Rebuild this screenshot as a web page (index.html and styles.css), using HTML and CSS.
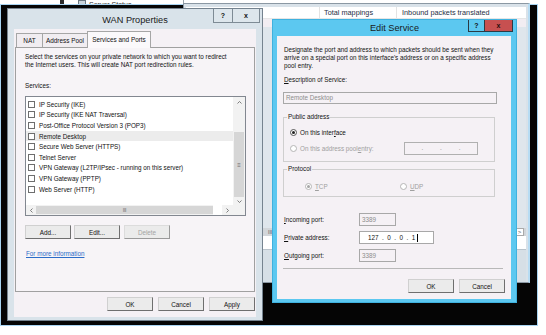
FILE: index.html
```html
<!DOCTYPE html>
<html lang="en">
<head>
  <meta charset="UTF-8" />
  <title>WAN Properties - Edit Service</title>
  <link rel="stylesheet" href="styles.css">
</head>
<body>
  <div class="screen">
    <div class="topbar">
      <span class="ss-icon"></span>
      <span class="ss-text">Server Status</span>
    </div>

    <div class="desk"></div>

    <!-- NAT window behind the dialogs -->
    <div class="window bgwin">
      <div class="bg-head">
        <span class="col c1"></span>
        <span class="col c2">Total mappings</span>
        <span class="col c3">Inbound packets translated</span>
      </div>
      <div class="bg-row"></div>
      <div class="bg-fill"></div>
      <div class="bg-hscroll">
        <span class="grip">III</span>
        <span class="bg-arrow">&gt;</span>
      </div>
      <div class="bg-white"></div>
      <div class="bg-rest"></div>
    </div>

    <!-- WAN Properties -->
    <div class="window wan">
      <div class="titlebar">
        <span></span>
        <span class="title">WAN Properties</span>
        <div class="caps">
          <span class="cap help">?</span>
          <span class="cap close">x</span>
        </div>
      </div>
      <div class="client">
        <div class="tabs">
          <span class="tab t-nat">NAT</span>
          <span class="tab t-pool">Address Pool</span>
          <span class="tab t-svc active">Services and Ports</span>
        </div>
        <div class="panel">
          <p class="intro">Select the services on your private network to which you want to redirect<br>the Internet users. This will create NAT port redirection rules.</p>
          <p class="label">Services:</p>
          <div class="listbox">
            <ul class="items">
              <li><span class="check"></span>IP Security (IKE)</li>
              <li><span class="check"></span>IP Security (IKE NAT Traversal)</li>
              <li><span class="check"></span>Post-Office Protocol Version 3 (POP3)</li>
              <li class="hover"><span class="check"></span>Remote Desktop</li>
              <li><span class="check"></span>Secure Web Server (HTTPS)</li>
              <li><span class="check"></span>Telnet Server</li>
              <li><span class="check"></span>VPN Gateway (L2TP/IPsec - running on this server)</li>
              <li><span class="check"></span>VPN Gateway (PPTP)</li>
              <li><span class="check"></span>Web Server (HTTP)</li>
            </ul>
            <div class="vscroll">
              <span class="sb-arrow up"><svg width="5" height="3" viewBox="0 0 5 3"><polyline points="0.5,2.5 2.5,0.5 4.5,2.5" fill="none" stroke="#606060" stroke-width="0.8"/></svg></span>
              <span class="sb-track"></span>
              <span class="sb-thumb v">&#8801;</span>
              <span class="sb-arrow dn"><svg width="5" height="3" viewBox="0 0 5 3"><polyline points="0.5,0.5 2.5,2.5 4.5,0.5" fill="none" stroke="#606060" stroke-width="0.8"/></svg></span>
            </div>
            <div class="hscroll">
              <span class="sb-arrow lt"><svg width="3" height="5" viewBox="0 0 3 5"><polyline points="2.5,0.5 0.5,2.5 2.5,4.5" fill="none" stroke="#606060" stroke-width="0.8"/></svg></span>
              <span class="sb-thumb h">III</span>
              <span class="sb-track"></span>
              <span class="sb-arrow rt"><svg width="3" height="5" viewBox="0 0 3 5"><polyline points="0.5,0.5 2.5,2.5 0.5,4.5" fill="none" stroke="#606060" stroke-width="0.8"/></svg></span>
            </div>
            <div class="corner"></div>
          </div>
          <div class="btnrow">
            <button class="btn">Add...</button>
            <button class="btn">Edit...</button>
            <button class="btn" disabled>Delete</button>
          </div>
          <a class="more" href="#">For more information</a>
        </div>
        <div class="footer">
          <button class="btn">OK</button>
          <button class="btn">Cancel</button>
          <button class="btn">Apply</button>
        </div>
      </div>
    </div>

    <!-- Edit Service -->
    <div class="window edit">
      <div class="titlebar">
        <span></span>
        <span class="title">Edit Service</span>
        <div class="caps">
          <span class="cap help">?</span>
          <span class="cap close">x</span>
        </div>
      </div>
      <div class="client">
        <p class="intro">Designate the port and address to which packets should be sent when they<br>arrive on a special port on this interface's address or on a specific address<br>pool entry.</p>
        <p class="label"><u>D</u>escription of Service:</p>
        <div class="field wide disabled">Remote Desktop</div>

        <fieldset class="group pub">
          <legend>Public address</legend>
          <div class="opt">
            <span class="radio on"></span>On this inter<u>f</u>ace
          </div>
          <div class="opt off">
            <span class="radio"></span>On this address pool <u>e</u>ntry:
            <span class="ipbox"><i>.</i><i>.</i><i>.</i></span>
          </div>
        </fieldset>

        <fieldset class="group proto">
          <legend>Protocol</legend>
          <div class="protos">
            <span class="opt off"><span class="radio on"></span><u>T</u>CP</span>
            <span class="opt off"><span class="radio"></span><u>U</u>DP</span>
          </div>
        </fieldset>

        <div class="ports">
          <span class="plabel"><u>I</u>ncoming port:</span>
          <span class="field port disabled">3389</span>
          <span class="plabel"><u>P</u>rivate address:</span>
          <span class="field ip">127 &nbsp;. &nbsp;0 &nbsp;. &nbsp;0 &nbsp;. &nbsp;1<span class="caret"></span></span>
          <span class="plabel"><u>O</u>utgoing port:</span>
          <span class="field port disabled">3389</span>
        </div>

        <div class="sep"></div>
        <div class="footer">
          <button class="btn">OK</button>
          <button class="btn">Cancel</button>
        </div>
      </div>
    </div>
  </div>
</body>
</html>
```

FILE: styles.css
```css
* {
  box-sizing: border-box;
}

body {
  margin: 0;
  font-family: "Liberation Sans", Arial, sans-serif;
  font-size: 6.3px;
  color: #111;
  background: #fff;
}

p {
  margin: 0;
}

.screen {
  position: relative;
  width: 546px;
  height: 335px;
  overflow: hidden;
  background: #fff;
}

/* strip of the server manager above */
.topbar {
  position: absolute;
  left: 60px;
  top: 0;
  width: 124px;
  height: 4px;
  overflow: hidden;
  border-left: 4px solid #2b2b2b;
  border-right: 1px solid #9aa6ae;
  display: flex;
  align-items: flex-end;
  gap: 3px;
  padding-left: 14px;
}

.ss-icon {
  width: 8px;
  height: 8px;
  margin-bottom: -4px;
  border: 1px solid #6a7680;
  background: #c9d2d9;
}

.ss-text {
  font-size: 7px;
  line-height: 8px;
  margin-bottom: -5px;
  color: #333;
}

.desk {
  position: absolute;
  left: 0;
  top: 4px;
  width: 538px;
  height: 322px;
  background: #050505;
  border: 1px solid #a9d5f3;
}

.window {
  position: absolute;
  display: flex;
  flex-direction: column;
}

/* background NAT window */
.bgwin {
  left: 183px;
  top: 3px;
  width: 347px;
  height: 280px;
  background: #d9e2e9;
  border: 1px solid #8b98a3;
  border-right: 2px solid #b7dcf3;
  padding: 3px 2px 0 2px;
}

.bg-head {
  display: flex;
  height: 12px;
  background: #fff;
  border-bottom: 1px solid #e6e6e6;
  font-size: 7.3px;
  line-height: 11px;
  color: #1f2f45;
}

.col {
  white-space: nowrap;
}

.c1 {
  width: 133px;
}

.c2 {
  width: 77px;
  padding-left: 4px;
  border-left: 1px solid #e3e3e3;
}

.c3 {
  flex: 1;
  padding-left: 5px;
  border-left: 1px solid #e3e3e3;
}

.bg-row {
  height: 8px;
  background: #f2edf2;
}

.bg-fill {
  flex: 1;
  background: #dfe6ec;
}

.bg-hscroll {
  height: 8px;
  background: #d2d6da;
  display: flex;
  align-items: center;
  justify-content: space-between;
  padding: 0 2px 0 82px;
  font-size: 5px;
  color: #555;
}

.bg-arrow {
  width: 9px;
  height: 8px;
  background: #fff;
  border: 1px solid #aaa;
  text-align: center;
  line-height: 6px;
  font-size: 6px;
}

.bg-white {
  height: 14px;
  background: #fff;
  border-bottom: 1px solid #b9c3cb;
}

.bg-rest {
  height: 32px;
  background: #d6dfe6;
}

/* title bars */
.titlebar {
  display: grid;
  grid-template-columns: 1fr auto 1fr;
  align-items: start;
}

.title {
  font-size: 9.2px;
  color: #1a1a1a;
  white-space: nowrap;
}

.caps {
  justify-self: end;
  display: flex;
}

.cap {
  display: flex;
  align-items: center;
  justify-content: center;
  font-weight: bold;
  font-size: 7px;
  border: 1px solid #7e8b95;
  border-top: none;
}

/* WAN Properties */
.wan {
  left: 7px;
  top: 8px;
  width: 256px;
  height: 313px;
  background: #d9e3ea;
  border: 1px solid #75838f;
}

.wan .titlebar {
  height: 20px;
}

.wan .title {
  line-height: 22px;
}

.wan .caps {
  margin-right: 2px;
}

.wan .cap {
  height: 14px;
  background: #dde6ec;
}

.wan .help {
  width: 20px;
}

.wan .close {
  width: 27px;
  border-left: none;
}

.wan .client {
  margin: 0 6px 3px 6px;
  height: 288px;
  background: #f5f1f5;
  padding: 4px 1px 0 1px;
}

.tabs {
  display: flex;
  align-items: flex-end;
  height: 14px;
  margin-left: 1px;
}

.tab {
  height: 14px;
  padding-top: 3px;
  text-align: center;
  font-size: 6.4px;
  border: 1px solid #a6a6a6;
  border-bottom: none;
  background: #f1edf1;
  white-space: nowrap;
}

.t-nat {
  width: 27px;
}

.t-pool {
  width: 45px;
  border-left: none;
}

.t-svc {
  width: 64px;
}

.tab.active {
  height: 17px;
  padding-top: 4px;
  margin-bottom: -1px;
  margin-left: -1px;
  background: #fbf9fb;
  position: relative;
  z-index: 1;
}

.panel {
  height: 245px;
  border: 1px solid #a0a0a0;
  background: #f7f4f7;
  padding: 5px 0 0 9px;
  display: flex;
  flex-direction: column;
  align-items: flex-start;
}

.intro {
  line-height: 8px;
  white-space: nowrap;
}

.panel .label {
  margin-top: 13px;
  line-height: 8px;
}

.listbox {
  margin-top: 6px;
  width: 221px;
  height: 120px;
  border: 1px solid #828790;
  background: #fff;
  display: grid;
  grid-template-columns: 1fr 12px;
  grid-template-rows: 108px 10px;
}

.items {
  list-style: none;
  margin: 0;
  padding: 2px 0 0 0;
  overflow: hidden;
}

.items li {
  height: 10.6px;
  display: flex;
  align-items: center;
  padding-left: 2px;
  white-space: nowrap;
}

.items li.hover {
  background: #ececec;
}

.check {
  width: 7px;
  height: 7px;
  border: 1px solid #6e6e6e;
  background: #fff;
  margin-right: 4px;
}

.vscroll {
  display: flex;
  flex-direction: column;
  background: #f2f2f2;
}

.sb-arrow {
  display: flex;
  align-items: center;
  justify-content: center;
}

.vscroll .up {
  height: 10px;
}

.vscroll .dn {
  height: 8px;
}

.vscroll .sb-track {
  height: 25px;
}

.sb-thumb {
  background: #d6d6d6;
  color: #666;
  display: flex;
  align-items: center;
  justify-content: center;
  font-size: 6px;
}

.sb-thumb.v {
  height: 65px;
  margin: 0 1px;
}

.hscroll {
  display: flex;
  background: #f2f2f2;
}

.hscroll .lt {
  width: 10px;
}

.sb-thumb.h {
  width: 177px;
  margin: 1px 0;
  font-size: 5px;
  letter-spacing: -0.3px;
}

.hscroll .sb-track {
  width: 9px;
  background: #fff;
}

.hscroll .rt {
  flex: 1;
}

.corner {
  background: #f2f2f2;
}

.btn {
  width: 46px;
  height: 14px;
  padding: 0;
  font-family: inherit;
  font-size: 6.3px;
  color: #111;
  background: #ebebeb;
  border: 1px solid;
  border-color: #d0d0d0 #6f6f6f #6f6f6f #d0d0d0;
  text-align: center;
}

.btn:disabled {
  color: #a3a3a3;
  border-color: #dcdcdc #9a9a9a #9a9a9a #dcdcdc;
}

.btnrow {
  margin-top: 9px;
  display: flex;
  gap: 3px;
}

.btnrow .btn:last-child {
  margin-left: 1px;
}

.more {
  margin-top: 11px;
  margin-left: 1px;
  color: #2c6cc8;
  line-height: 8px;
}

.footer {
  display: flex;
  justify-content: flex-end;
  gap: 5px;
}

.wan .footer {
  margin-top: 5px;
}

/* Edit Service */
.edit {
  left: 272px;
  top: 19px;
  width: 245px;
  height: 284px;
  background: #5cc8f0;
  border: 1px solid #3fb2df;
}

.edit .titlebar {
  height: 16px;
}

.edit .title {
  line-height: 17px;
}

.edit .caps {
  margin-right: 3px;
}

.edit .cap {
  height: 12px;
  border-color: #2a3a44;
}

.edit .help {
  width: 17px;
  background: #5cc8f0;
}

.edit .close {
  width: 28px;
  background: #c75050;
  border-left: none;
  color: #2a0d0d;
}

.edit .client {
  margin: 0 5px 3px 4px;
  flex: 1;
  background: #f5f1f5;
  padding: 10px 6px 0 6px;
  display: flex;
  flex-direction: column;
  align-items: flex-start;
}

.edit .intro {
  padding-left: 1px;
}

.edit .label {
  margin-top: 6px;
  padding-left: 1px;
  line-height: 8px;
}

.field {
  height: 13px;
  border: 1px solid #a8a8a8;
  background: #fff;
  padding-left: 2px;
  line-height: 11px;
  white-space: nowrap;
}

.field.disabled {
  background: #f5f1f5;
  color: #8c8c8c;
}

.field.wide {
  margin-top: 8px;
  width: 214px;
  height: 12px;
  line-height: 10px;
}

.group {
  margin: 9px 0 0 0;
  width: 212px;
  border: 1px solid #cfcfcf;
  padding: 5px 0 6px 3px;
}

.group legend {
  padding: 0 1px;
  line-height: 8px;
}

.opt {
  display: flex;
  align-items: center;
  height: 13px;
  margin-left: 3px;
  white-space: nowrap;
}

.opt + .opt {
  margin-top: 3px;
}

.opt.off {
  color: #a0a0a0;
}

.radio {
  width: 7px;
  height: 7px;
  border-radius: 50%;
  border: 1px solid #555;
  background: #fff;
  margin-right: 3px;
  display: flex;
  align-items: center;
  justify-content: center;
}

.radio.on::after {
  content: "";
  width: 3px;
  height: 3px;
  border-radius: 50%;
  background: #222;
}

.opt.off .radio {
  border-color: #b5b5b5;
}

.opt.off .radio.on::after {
  background: #a5a5a5;
}

.ipbox {
  margin-left: auto;
  margin-right: 16px;
  width: 74px;
  height: 13px;
  border: 1px solid #b0b0b0;
  display: flex;
  justify-content: space-around;
  padding: 0 8px;
  color: #8a8a8a;
  font-style: normal;
  line-height: 10px;
}

.ipbox i {
  font-style: normal;
}

.group.proto {
  margin-top: 3px;
  padding: 9px 0 5px 3px;
}

.protos {
  display: grid;
  grid-template-columns: 95px 1fr;
  padding-left: 18px;
}

.protos .opt {
  height: 9px;
  margin-left: 0;
}

.protos .opt + .opt {
  margin-top: 0;
}

.ports {
  margin-top: 16px;
  display: grid;
  grid-template-columns: 76px auto;
  row-gap: 5px;
  align-items: center;
  justify-items: start;
}

.plabel {
  padding-left: 1px;
}

.field.port {
  width: 37px;
}

.field.ip {
  width: 75px;
  padding-left: 8px;
  display: flex;
  align-items: center;
}

.caret {
  width: 1px;
  height: 8px;
  margin-left: 2px;
  background: #000;
}

.sep {
  margin-top: 6px;
  width: 220px;
  border-top: 1px solid #b8b8b8;
}

.edit .footer {
  margin-top: 10px;
  align-self: stretch;
  gap: 5px;
}
```
